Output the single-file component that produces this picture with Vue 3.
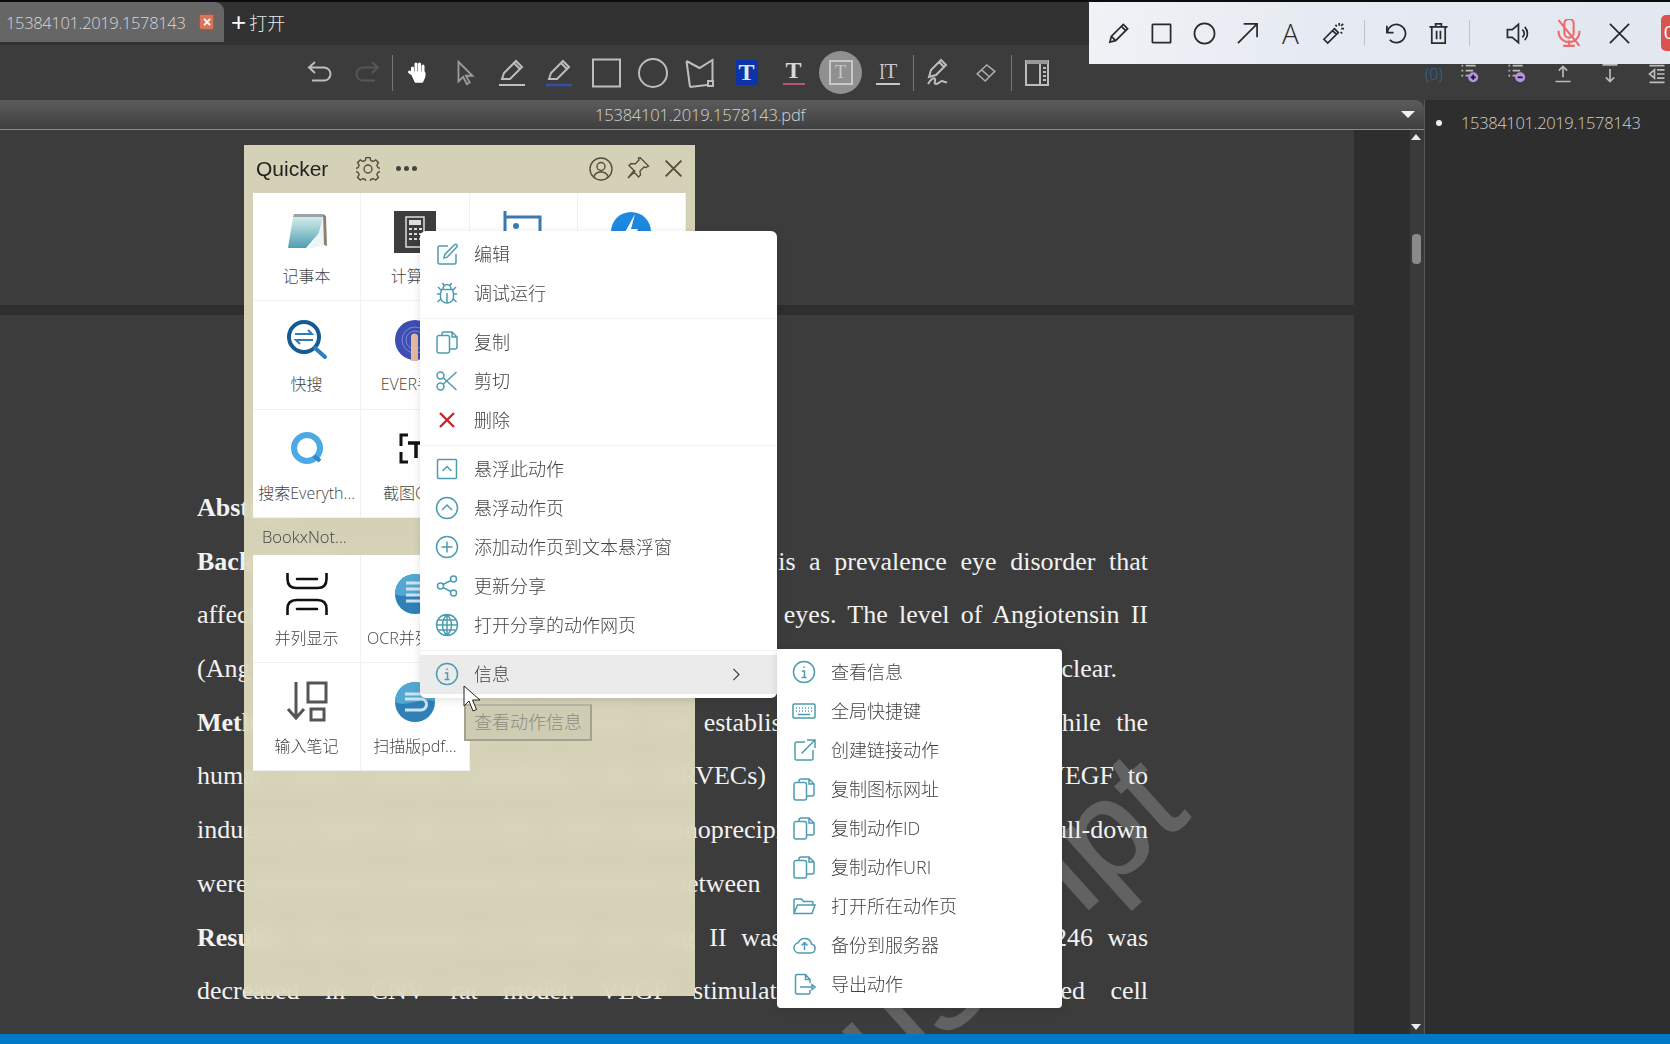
<template>
  <div class="app">
    <!-- タブ -->
    <header class="tabstrip">
      <div class="tab">
        <span class="tab-title">15384101.2019.1578143</span>
        <span class="tab-close">×</span>
      </div>
      <div class="tab-open"><span class="plus">+</span>打开</div>
    </header>

    <!-- ツールバー -->
    <div class="toolbar">
      <button class="tool"><svg viewBox="0 0 30 30" class="ico"><path d="M10 4L4 9.5l6 5.5M4 9.5h15a6.5 6.5 0 0 1 0 13H7" /></svg></button>
      <button class="tool"><svg viewBox="0 0 30 30" class="ico dim"><path d="M20 4l6 5.5-6 5.5M26 9.5H11a6.5 6.5 0 0 0 0 13h12" /></svg></button>
      <i class="sep"></i>
      <button class="tool">
        <svg viewBox="0 0 30 30" class="ico hand"><path d="M9.5 16V10M13 14V6M16.5 14V6M20 15V8M9.5 16l-3-2M10 17l3 6h6l2-5v-3" /><path class="palm" d="M10 15h10v5l-2 3h-5z" /></svg>
      </button>
      <button class="tool"><svg viewBox="0 0 30 30" class="ico thin"><path d="M8 3v21l5-5 4 8 3-2-4-7h7z" /></svg></button>
      <button class="tool"><svg viewBox="0 0 30 30" class="ico"><path d="M5 21l2-6L19 3l6 6-12 12zM17 5l6 6M2 27h26" /></svg></button>
      <button class="tool"><svg viewBox="0 0 30 30" class="ico"><path d="M5 21l2-6L19 3l6 6-12 12zM17 5l6 6" /><path class="blue-line" d="M2 27h26" /></svg></button>
      <button class="tool"><svg viewBox="0 0 30 30" class="ico"><path d="M2 1.5h27v27H2z" /></svg></button>
      <button class="tool"><svg viewBox="0 0 30 30" class="ico"><path d="M29 15a14 14 0 1 1-28 0 14 14 0 1 1 28 0z" /></svg></button>
      <button class="tool"><svg viewBox="0 0 30 30" class="ico"><path d="M1.5 3l13 7 13-8v21M22 27l-17 2zM1.5 3L5 29" /><path d="M23 23h5v5h-5z" /></svg></button>
      <button class="tool"><span class="t-box blue">T</span></button>
      <button class="tool"><span class="t-under">T</span></button>
      <button class="tool"><span class="t-round"><span class="t-square">T</span></span></button>
      <button class="tool"><span class="t-beam"><b>I</b>T</span></button>
      <i class="sep"></i>
      <button class="tool"><svg viewBox="0 0 30 30" class="ico"><path d="M5 19L7 12 17 2l5 5-10 10zM15 4l5 5M4 26c3-5 6-7 7-5s-2 5 1 5 4-3 6-3 2 2 5 1" /></svg></button>
      <button class="tool"><svg viewBox="0 0 30 30" class="ico small"><path d="M4 16L16 5l10 8-12 12zM9.5 11l10 9" /></svg></button>
      <i class="sep"></i>
      <button class="tool"><svg viewBox="0 0 30 30" class="ico"><path d="M4 3h22v24H4zM18 3v24" /><path class="fat" d="M4 4h22" /><path d="M21 10h3M21 14h3M21 18h3M21 22h3" /></svg></button>
    </div>

    <div class="main">
      <section class="viewer">
        <div class="titlebar">
          <span class="file-name">15384101.2019.1578143.pdf</span>
          <span class="title-arrow"></span>
        </div>
        <div class="scroller">
          <div class="pages">
            <div class="page first"></div>
            <article class="page second">
              <div class="watermark">Manuscript</div>
              <p class="line"><b>Abstract</b></p>
              <p class="line just"><b>Background:</b> Choroidal neovascularization (CNVs) is a prevalence eye disorder that</p>
              <p class="line just">affects the choroid and retina, causing visual loss in eyes. The level of Angiotensin II</p>
              <p class="line just short">(Ang II) and its function in the development of CNV remains unclear.</p>
              <p class="line just"><b>Methods:</b> The retinal CNV rat model was established in vivo by laser, while the</p>
              <p class="line just">human retinal vascular endothelial cells (HRVECs) were then treated with VEGF to</p>
              <p class="line just">induce an HRVE cells in vitro. RNA immunoprecipitation assays and then pull-down</p>
              <p class="line wide-words">were performed to determine the interaction between</p>
              <p class="line just"><b>Results:</b> The expression of VEGF and Ang II was increased, while miR-1246 was</p>
              <p class="line just">decreased in CNV rat model. VEGF stimulation of RVECs promoted cell</p>
              <p class="line just">proliferation, migration and tube formation, and the level of Ang II was elevated</p>
            </article>
          </div>
          <div class="scrollbar">
            <span class="sb-up"></span>
            <span class="sb-thumb"></span>
            <span class="sb-down"></span>
          </div>
        </div>
      </section>

      <aside class="outline">
        <ul>
          <li>15384101.2019.1578143</li>
        </ul>
      </aside>
    </div>

    <div class="statusbar"></div>

    <!-- 右パネルのツール（フロートバーの下に隠れる） -->
    <div class="outline-tools">
      <span class="count">(0)</span>
      <svg viewBox="0 0 24 24" class="ot"><path d="M3 2h2M8 2h12M3 8h2M8 8h9M3 14h2M8 14h4" /><circle cx="17" cy="16" r="6" fill="#b493df" stroke="none" /><path class="dark" d="M14 16h6M17 13v6" /></svg>
      <svg viewBox="0 0 24 24" class="ot"><path d="M3 2h2M8 2h12M3 8h2M8 8h9M3 14h2M8 14h4" /><circle cx="17" cy="16" r="6" fill="#b493df" stroke="none" /><path class="dark" d="M14 16h6" /></svg>
      <svg viewBox="0 0 24 24" class="ot"><path d="M12 16V3M7 8l5-5 5 5M3 21h18" /></svg>
      <svg viewBox="0 0 24 24" class="ot"><path d="M12 6v15M7 16l5 5 5-5M3 1h18" /></svg>
      <svg viewBox="0 0 24 24" class="ot"><path d="M3 2h18M12 7h9M12 12h9M12 17h9M3 22h18M9 7v10l-6-5z" /></svg>
    </div>

    <!-- フロートツールバー -->
    <div class="floatbar">
      <button class="fb"><svg viewBox="0 0 24 24"><path d="M3 21l1.5-6L17 2.5l4.5 4.5L9 19.5zM4.5 15L9 19.5M15 4.5L19.5 9" /></svg></button>
      <button class="fb"><svg viewBox="0 0 24 24"><path d="M3 2.5h18a.5.5 0 0 1 .5.5v18a.5.5 0 0 1-.5.5H3a.5.5 0 0 1-.5-.5V3a.5.5 0 0 1 .5-.5z" /></svg></button>
      <button class="fb"><svg viewBox="0 0 24 24"><path d="M22.5 12a10.5 10.5 0 1 1-21 0 10.5 10.5 0 1 1 21 0z" /></svg></button>
      <button class="fb"><svg viewBox="0 0 24 24"><path d="M2 22L22 2M8 2h14v14" /></svg></button>
      <button class="fb"><span class="fb-a">A</span></button>
      <button class="fb"><svg viewBox="0 0 24 24"><path d="M2 18L13 7l4 4L6 22zM11 9l4 4M18 1v3M23 7h-3M14 3l1.5 1.5M22 2l-2 2M21 12l-1.5-1.5" /></svg></button>
      <i class="fsep"></i>
      <button class="fb"><svg viewBox="0 0 24 24"><path d="M3 4v7h7M3.5 11A9.5 9.5 0 1 1 6 18.5" /></svg></button>
      <button class="fb"><svg viewBox="0 0 24 24"><path d="M2.5 5h19M9 5V2h6v3M5 5v17h14V5M10 9v9M14 9v9" /></svg></button>
      <i class="fsep wide"></i>
      <button class="fb sound"><svg viewBox="0 0 24 24"><path d="M1.5 8h5L13 2.5v19L6.5 16h-5zM17 8a5 5 0 0 1 0 8M19.5 5a10 10 0 0 1 0 14" /></svg></button>
      <button class="fb mic"><svg viewBox="0 0 24 24"><path d="M8 4a4 4 0 0 1 8 0v8a4 4 0 0 1-8 0zM3 10c0 13 18 13 18 0M12 18.5v4M7 23h10M3 1l18 22" /></svg></button>
      <button class="fb close"><svg viewBox="0 0 24 24"><path d="M2 2l20 20M22 2L2 22" /></svg></button>
      <span class="rec">0</span>
    </div>

    <!-- Quicker パネル -->
    <div class="quicker">
      <div class="q-head">
        <span class="q-title">Quicker</span>
        <svg class="q-gear" viewBox="0 0 24 24"><path d="M10 1.5h4l.7 3 2.3 1 2.7-1.6 2.8 2.8-1.6 2.7 1 2.3 2.6.7v3.2l-2.6.7-1 2.3 1.6 2.7-2.8 2.8-2.7-1.6-2.3 1-.7 2.9h-4l-.7-2.9-2.3-1-2.7 1.6-2.8-2.8 1.6-2.7-1-2.3-2.6-.7v-3.2l2.6-.7 1-2.3L1.5 6.7l2.8-2.8L7 5.5l2.3-1zM16 13a4 4 0 1 1-8 0 4 4 0 1 1 8 0z" transform="translate(0 -1)" /></svg>
        <span class="q-dots"><i></i><i></i><i></i></span>
        <svg class="q-user" viewBox="0 0 24 24"><path d="M23 12a11 11 0 1 1-22 0 11 11 0 1 1 22 0zM16 9.5a4 4 0 1 1-8 0 4 4 0 1 1 8 0zM5 19.5c1-3 3-4.5 7-4.5s6 1.5 7 4.5" /></svg>
        <svg class="q-pin" viewBox="0 0 24 24"><path d="M14 1.5l8.5 8.5-2.5 1.5-2-.5-4 4 .5 4-2 2L7.5 15 2 22l7-6.500L3 9.500l2-2 4 .5 4-4-.5-2z" /></svg>
        <svg class="q-x" viewBox="0 0 24 24"><path d="M3 3l18 18M21 3L3 21" /></svg>
      </div>

      <div class="q-grid">
        <div class="cell">
          <svg class="cell-ico" viewBox="0 0 42 42">
            <defs><linearGradient id="note" x1="0" y1="0" x2="0" y2="1"><stop offset="0" stop-color="#d4ecec" /><stop offset="1" stop-color="#4f9fb0" /></linearGradient></defs>
            <path d="M8 3h29v3H7z" fill="#9aa4a6" />
            <path d="M7 6h30l-4 16-13 15H2z" fill="url(#note)" />
            <path d="M37 6l1 28-16 4 11-16z" fill="#eef3f4" />
            <path d="M37 3l3 2 1 30-3-1z" fill="#8f7f6f" />
          </svg>
          <span>记事本</span>
        </div>
        <div class="cell">
          <svg class="cell-ico" viewBox="0 0 42 42">
            <path d="M0 0h42v42H0z" fill="#3d3d3d" />
            <path d="M12 6h18v30H12z" fill="none" stroke="#ddd" stroke-width="1.5" />
            <path d="M15 9h12v5H15z" fill="#ddd" />
            <path d="M15 18h3M20 18h3M25 18h3M15 23h3M20 23h3M25 23h3M15 28h3M20 28h3M25 28h3" stroke="#ddd" stroke-width="2" />
          </svg>
          <span>计算器</span>
        </div>
        <div class="cell">
          <svg class="cell-ico" viewBox="0 0 42 42">
            <path d="M3 0v6h35v30H3V0" fill="none" stroke="#3c78b0" stroke-width="3" />
            <circle cx="14" cy="15" r="3" fill="#3c78b0" />
          </svg>
          <span></span>
        </div>
        <div class="cell">
          <svg class="cell-ico" viewBox="0 0 42 42">
            <circle cx="21" cy="21" r="20" fill="#1c88e0" />
            <path d="M25 3L14 23h7l-4 15 11-20h-7z" fill="#fff" />
          </svg>
          <span></span>
        </div>

        <div class="cell">
          <svg class="cell-ico" viewBox="0 0 42 42">
            <circle cx="18" cy="18" r="15" fill="none" stroke="#165a92" stroke-width="4" />
            <path d="M29 29l10 9" stroke="#2a7dbe" stroke-width="4" stroke-linecap="round" />
            <path d="M9 15h17l-4-4M27 21H10l4 4" fill="none" stroke="#2a7dbe" stroke-width="2" />
          </svg>
          <span>快搜</span>
        </div>
        <div class="cell">
          <svg class="cell-ico" viewBox="0 0 42 42">
            <circle cx="21" cy="21" r="20" fill="#3d4fb0" />
            <circle cx="21" cy="21" r="13" fill="none" stroke="#7c8ad6" stroke-width="1" />
            <circle cx="21" cy="21" r="9" fill="none" stroke="#7c8ad6" stroke-width="1" />
            <path d="M17 42V18a3.5 3.5 0 0 1 7 0v24z" fill="#e6b9a0" />
          </svg>
          <span>EVER手势</span>
        </div>
        <div class="cell"></div>
        <div class="cell"></div>

        <div class="cell">
          <svg class="cell-ico" viewBox="0 0 42 42">
            <circle cx="21" cy="20" r="13" fill="none" stroke="#4ba9e6" stroke-width="6" />
            <path d="M28 28l6 5" stroke="#2f86c8" stroke-width="4" />
          </svg>
          <span>搜索Everyth...</span>
        </div>
        <div class="cell">
          <svg class="cell-ico" viewBox="0 0 42 42">
            <path d="M14 7H7v11M7 24v10h7" fill="none" stroke="#111" stroke-width="3" />
            <path d="M14 15h16M22 15v15" fill="none" stroke="#111" stroke-width="3.5" />
          </svg>
          <span>截图OCR</span>
        </div>
        <div class="cell"></div>
        <div class="cell"></div>
      </div>

      <div class="q-group">BookxNot...</div>

      <div class="q-grid two">
        <div class="cell">
          <svg class="cell-ico" viewBox="0 0 42 42">
            <path d="M1.5 0v6c0 7 4 9 9 9h21c5 0 9-2 9-9V0M1.5 42v-6c0-7 4-9 9-9h21c5 0 9 2 9 9v6M11 6h20M11 36h20" fill="none" stroke="#111" stroke-width="2.6" stroke-linecap="round" />
          </svg>
          <span>并列显示</span>
        </div>
        <div class="cell">
          <svg class="cell-ico" viewBox="0 0 42 42">
            <circle cx="21" cy="21" r="20" fill="#2f7fb8" />
            <path d="M1 21a20 20 0 0 1 40 0C30 15 12 27 1 21z" fill="#52a8d2" />
            <path d="M12 10h20M12 16h20M12 22h20M12 28h20" stroke="#cde4f0" stroke-width="3" />
          </svg>
          <span>OCR并列显示</span>
        </div>
        <div class="cell">
          <svg class="cell-ico" viewBox="0 0 42 42">
            <path d="M10 1v36M2 28l8 9 8-9M22 2h18v19H22zM25 28h13v11H25z" fill="none" stroke="#555" stroke-width="3" />
          </svg>
          <span>输入笔记</span>
        </div>
        <div class="cell">
          <svg class="cell-ico" viewBox="0 0 42 42">
            <circle cx="21" cy="21" r="20" fill="#2f7fb8" />
            <path d="M1 21a20 20 0 0 1 40 0C30 15 12 27 1 21z" fill="#52a8d2" />
            <path d="M11 13h20M11 18h16a5 5 0 0 1 0 11H11" fill="none" stroke="#cde4f0" stroke-width="3" />
          </svg>
          <span>扫描版pdf...</span>
        </div>
      </div>
    </div>

    <!-- 右クリックメニュー -->
    <div class="menu">
      <template v-for="(item, i) in menuItems" :key="i">
        <div v-if="item.sep" class="menu-sep"></div>
        <div v-else class="menu-item" :class="{ active: item.active }">
          <svg class="menu-ico" :class="{ danger: item.danger }" viewBox="0 0 24 24"><path :d="icons[item.icon]" /></svg>
          <span>{{ item.label }}</span>
          <svg v-if="item.more" class="menu-more" viewBox="0 0 24 24"><path d="M7 3l9 9-9 9" /></svg>
        </div>
      </template>
    </div>

    <div class="menu sub">
      <div v-for="item in subItems" :key="item.label" class="menu-item">
        <svg class="menu-ico" viewBox="0 0 24 24"><path :d="icons[item.icon]" /></svg>
        <span>{{ item.label }}</span>
      </div>
    </div>

    <div class="tip">查看动作信息</div>
    <svg class="pointer" viewBox="0 0 20 28"><path d="M1 1v20l5-5 4 10 3.5-1.5-4-9.5H17z" /></svg>
  </div>
</template>

<script setup>
const circle = 'M22.5 12a10.5 10.5 0 1 1-21 0 10.5 10.5 0 1 1 21 0z'
const copy = 'M7 5V4a2 2 0 0 1 2-2h8l5 5v10a2 2 0 0 1-2 2h-5M17 2v5h5M4 5.5h8.5a2 2 0 0 1 2 2V21a2 2 0 0 1-2 2H4a2 2 0 0 1-2-2V7.5a2 2 0 0 1 2-2z'

const icons = {
  edit: 'M13 4H4.5A1.5 1.5 0 0 0 3 5.5v15A1.5 1.5 0 0 0 4.5 22h15a1.5 1.5 0 0 0 1.5-1.5V12M9 16l.8-3.6L19.5 2.7a1.6 1.6 0 0 1 2.3 0 1.6 1.6 0 0 1 0 2.3L12.2 15.2z',
  bug: 'M8 8a4 4.5 0 0 1 8 0M6.5 8.5h11l1 4V16a6.5 6 0 0 1-13 0v-3.5zM12 12v10M6 13H2M18 13h4M5.7 18l-3.2 3M18.3 18l3.2 3M6 9L3 6M18 9l3-3M9 4.5L7.5 2M15 4.5L16.5 2',
  copy,
  cut: 'M9 6.5a3.5 3.5 0 1 1-7 0 3.5 3.5 0 1 1 7 0zM9 17.5a3.5 3.5 0 1 1-7 0 3.5 3.5 0 1 1 7 0zM8.2 8.8L21.5 21M8.2 15.2L21.5 3',
  del: 'M5 5l14 14M19 5L5 19',
  floatOne: 'M3.5 2.5h17a1 1 0 0 1 1 1v17a1 1 0 0 1-1 1h-17a1 1 0 0 1-1-1v-17a1 1 0 0 1 1-1zM7.5 14L12 9.5l4.5 4.5',
  floatPage: circle + 'M7 14l5-5 5 5',
  add: circle + 'M12 6.5v11M6.5 12h11',
  share: 'M21.5 5a3 3 0 1 1-6 0 3 3 0 1 1 6 0zM21.5 19a3 3 0 1 1-6 0 3 3 0 1 1 6 0zM8.5 12a3 3 0 1 1-6 0 3 3 0 1 1 6 0zM8 10.5l7.8-4M8 13.5l7.8 4',
  globe: circle + 'M12 1.5c-6 6-6 15 0 21M12 1.5c6 6 6 15 0 21M1.5 12h21M3 7h18M3 17h18M12 1.5v21',
  info: circle + 'M12 6.5V8M9.8 11h2.7v6M9.5 17.5h5',
  keyboard: 'M2 5h20a1 1 0 0 1 1 1v12a1 1 0 0 1-1 1H2a1 1 0 0 1-1-1V6a1 1 0 0 1 1-1zM4 9h1M7 9h1M10 9h1M13 9h1M16 9h1M19 9h1M4 12h1M7 12h1M10 12h1M13 12h1M16 12h1M19 12h1M6 15.5h12',
  link: 'M13 4H4.5A1.5 1.5 0 0 0 3 5.5v15A1.5 1.5 0 0 0 4.5 22h15a1.5 1.5 0 0 0 1.5-1.5V12M9.5 15.5L23 2M15 2h8v8',
  folder: 'M2 19V6a1 1 0 0 1 1-1h6.5l2 2.5H20a1 1 0 0 1 1 1V11M2 19.5L5.5 11H23l-3 8.5z',
  cloud: 'M7 20h11.5a4.5 4.5 0 0 0 1-8.9 7 7 0 0 0-13.3-1.4A5.2 5.2 0 0 0 7 20zM12.5 17v-7M9.5 12.5l3-3 3 3',
  exportAct: 'M18 11V7.5L13.5 2.5H5A1.5 1.5 0 0 0 3.5 4v16.5A1.5 1.5 0 0 0 5 22h11.5a1.5 1.5 0 0 0 1.5-1.5V18M13.5 2.5v5H18M8 15h12M20 12.5l3 2.5-3 2.5z',
}

const menuItems = [
  { label: '编辑', icon: 'edit' },
  { label: '调试运行', icon: 'bug' },
  { sep: true },
  { label: '复制', icon: 'copy' },
  { label: '剪切', icon: 'cut' },
  { label: '删除', icon: 'del', danger: true },
  { sep: true },
  { label: '悬浮此动作', icon: 'floatOne' },
  { label: '悬浮动作页', icon: 'floatPage' },
  { label: '添加动作页到文本悬浮窗', icon: 'add' },
  { label: '更新分享', icon: 'share' },
  { label: '打开分享的动作网页', icon: 'globe' },
  { sep: true },
  { label: '信息', icon: 'info', active: true, more: true },
]

const subItems = [
  { label: '查看信息', icon: 'info' },
  { label: '全局快捷键', icon: 'keyboard' },
  { label: '创建链接动作', icon: 'link' },
  { label: '复制图标网址', icon: 'copy' },
  { label: '复制动作ID', icon: 'copy' },
  { label: '复制动作URI', icon: 'copy' },
  { label: '打开所在动作页', icon: 'folder' },
  { label: '备份到服务器', icon: 'cloud' },
  { label: '导出动作', icon: 'exportAct' },
]
</script>

<style scoped>
.app {
  position: relative;
  width: 1670px;
  height: 1044px;
  overflow: hidden;
  display: flex;
  flex-direction: column;
  background: #333;
  font-family: "Open Sans", "Noto Sans CJK SC", sans-serif;
  font-weight: 300;
}

svg {
  display: block;
}

button {
  background: none;
  border: none;
  padding: 0;
  margin: 0;
  display: flex;
  align-items: center;
  justify-content: center;
}

/* tabs */
.tabstrip {
  height: 45px;
  box-sizing: border-box;
  border-top: 2px solid #0c0c0c;
  background: #323232;
  display: flex;
  flex-shrink: 0;
}

.tab {
  width: 224px;
  height: 40px;
  box-sizing: border-box;
  padding-left: 6px;
  background: #666;
  border-radius: 0 9px 0 0;
  display: flex;
  align-items: center;
  color: #d6d6d6;
  font-size: 16.5px;
  letter-spacing: -0.35px;
}

.tab-close {
  width: 13px;
  height: 14px;
  margin-left: 15px;
  background: #d8745a;
  box-shadow: 0 0 3px #c8583c;
  color: #fff;
  font: bold 14px/14px "Liberation Sans", sans-serif;
  text-align: center;
}

.tab-open {
  height: 40px;
  display: flex;
  align-items: center;
  padding-left: 7px;
  color: #e6e6e6;
  font-size: 18px;
}

.plus {
  font: 26px/1 "Liberation Sans", sans-serif;
  color: #fff;
  margin-right: 3px;
}

/* toolbar */
.toolbar {
  height: 55px;
  flex-shrink: 0;
  box-sizing: border-box;
  padding-left: 296px;
  background: #3c3c3c;
  display: flex;
  align-items: center;
}

.tool {
  width: 47px;
  height: 55px;
  flex-shrink: 0;
}

.sep {
  width: 1px;
  height: 36px;
  margin: 0 1.5px;
  background: #777;
  flex-shrink: 0;
}

.ico {
  width: 30px;
  height: 30px;
  fill: none;
  stroke: #bdbdbd;
  stroke-width: 2;
}

.ico.dim {
  stroke: #565656;
}

.ico.thin {
  stroke: #9a9a9a;
  width: 28px;
  height: 28px;
}

.ico.small {
  width: 24px;
  height: 24px;
  stroke-width: 2;
  stroke: #aaa;
}

.ico.hand {
  stroke: #fff;
  stroke-width: 3;
  stroke-linecap: round;
}

.palm {
  fill: #fff;
}

.blue-line {
  stroke: #2e52a8;
  stroke-width: 2.5;
}

.fat {
  stroke-width: 4;
  stroke: #999;
}

.t-box {
  width: 22px;
  height: 25px;
  font: bold 24px/25px "Liberation Serif", serif;
  text-align: center;
}

.t-box.blue {
  background: #0c33a8;
  color: #dfe6f5;
}

.t-under {
  width: 22px;
  height: 25px;
  box-sizing: border-box;
  border-bottom: 2px solid #b8567a;
  font: bold 24px/21px "Liberation Serif", serif;
  color: #d8d8d8;
  text-align: center;
}

.t-round {
  width: 43px;
  height: 43px;
  border-radius: 50%;
  background: #909090;
  display: flex;
  align-items: center;
  justify-content: center;
}

.t-square {
  width: 20px;
  height: 21px;
  box-sizing: content-box;
  border: 2px solid #c8c8c8;
  font: 18px/21px "Liberation Serif", serif;
  color: #c8c8c8;
  text-align: center;
}

.t-beam {
  width: 24px;
  height: 25px;
  box-sizing: border-box;
  border-bottom: 2px solid #c8c8c8;
  font: 21px/22px "Liberation Serif", serif;
  color: #c8c8c8;
  display: flex;
  justify-content: center;
}

.t-beam b {
  font-weight: 400;
  font-size: 24px;
  transform: scaleX(0.7);
  margin-right: -1px;
}

/* main */
.main {
  flex: 1;
  min-height: 0;
  display: flex;
}

.viewer {
  width: 1424px;
  flex-shrink: 0;
  display: flex;
  flex-direction: column;
  background: #3c3c3c;
}

.titlebar {
  height: 30px;
  flex-shrink: 0;
  box-sizing: border-box;
  padding: 0 9px 0 595px;
  border-bottom: 1px solid #8a8a8a;
  border-radius: 0 9px 0 0;
  background: linear-gradient(#5c5c5c, #3f3f3f);
  display: flex;
  align-items: center;
  justify-content: space-between;
  color: #d4d4d4;
  font-size: 16.5px;
  letter-spacing: -0.2px;
}

.title-arrow {
  border-left: 7px solid transparent;
  border-right: 7px solid transparent;
  border-top: 7px solid #f2f2f2;
}

.scroller {
  flex: 1;
  min-height: 0;
  display: flex;
}

.pages {
  width: 1410px;
  background: #2e2e2e;
  overflow: hidden;
}

.page {
  position: relative;
  width: 1354px;
  background: #3c3c3c;
  font-family: "Liberation Serif", serif;
  font-weight: 400;
  color: #f2f2f2;
  font-size: 26px;
}

.page.first {
  height: 175px;
  margin-bottom: 10px;
}

.page.second {
  height: 760px;
  box-sizing: border-box;
  padding: 166px 206px 0 197px;
  overflow: hidden;
}

.line {
  margin: 0;
  height: 53.7px;
  line-height: 53.7px;
  white-space: nowrap;
  position: relative;
}

.line.just {
  text-align: justify;
  text-align-last: justify;
}

.line.short {
  margin-right: 31px;
}

.line.wide-words {
  word-spacing: 2px;
}

.watermark {
  position: absolute;
  right: 147px;
  bottom: 242px;
  transform: rotate(-42deg);
  transform-origin: 100% 100%;
  font-family: "Liberation Sans", sans-serif;
  font-size: 140px;
  line-height: 1;
  color: #626262;
  -webkit-text-stroke: 1.5px #626262;
  white-space: nowrap;
}

.scrollbar {
  width: 14px;
  background: #3a3a3a;
  position: relative;
}

.sb-up,
.sb-down {
  position: absolute;
  left: 1px;
  border-left: 5px solid transparent;
  border-right: 5px solid transparent;
}

.sb-up {
  top: 4px;
  border-bottom: 6px solid #eee;
}

.sb-down {
  bottom: 4px;
  border-top: 6px solid #eee;
}

.sb-thumb {
  position: absolute;
  top: 104px;
  left: 2px;
  width: 9px;
  height: 30px;
  border-radius: 4px;
  background: #8a8a8a;
}

/* outline */
.outline {
  flex: 1;
  background: #2e2e2e;
  border-left: 1px solid #585858;
  color: #cfcfcf;
  font-size: 16.5px;
  letter-spacing: -0.35px;
}

.outline ul {
  margin: 0;
  padding: 11px 0 0 36px;
  list-style: none;
}

.outline li {
  position: relative;
  line-height: 24px;
}

.outline li::before {
  content: "";
  position: absolute;
  left: -25px;
  top: 9px;
  width: 6px;
  height: 6px;
  border-radius: 50%;
  background: #eee;
}

.statusbar {
  height: 10px;
  flex-shrink: 0;
  background: #0078c8;
  position: relative;
}

.outline-tools {
  position: absolute;
  left: 1425px;
  top: 60px;
  width: 245px;
  height: 28px;
  display: flex;
  align-items: center;
}

.count {
  width: 16px;
  color: #2a6ca0;
  font-size: 16px;
}

.ot {
  width: 20px;
  height: 24px;
  margin-left: 27px;
  fill: none;
  stroke: #bbb;
  stroke-width: 2;
}

.ot:first-of-type {
  margin-left: 18px;
}

.ot .dark {
  stroke: #1a1040;
}

/* floating bar */
.floatbar {
  position: absolute;
  left: 1089px;
  top: 2px;
  width: 581px;
  height: 62px;
  box-sizing: border-box;
  padding-left: 8px;
  background: linear-gradient(100deg, #f0f2f6, #e6eaf2 40%, #e3e8f0);
  display: flex;
  align-items: center;
}

.fb {
  width: 43px;
  height: 40px;
  flex-shrink: 0;
}

.fb svg {
  width: 23px;
  height: 23px;
  fill: none;
  stroke: #2a2a2a;
  stroke-width: 1.8;
}

.fb-a {
  font: 300 28px/28px "Open Sans", sans-serif;
  color: #2a2a2a;
}

.fsep {
  width: 1px;
  height: 26px;
  margin: 0 9px;
  background: #c0c4cc;
  flex-shrink: 0;
}

.fsep.wide {
  margin-right: 22px;
}

.fb.sound {
  width: 51px;
}

.fb.mic {
  width: 51px;
}

.fb.mic svg {
  width: 28px;
  height: 28px;
  stroke: #ef6a6a;
}

.fb.close {
  width: 51px;
}

.rec {
  width: 30px;
  height: 36px;
  margin-left: 16px;
  flex-shrink: 0;
  background: #d9534f;
  border-radius: 5px;
  color: #fff;
  font: 18px/36px "Liberation Sans", sans-serif;
  padding-left: 3px;
}

/* quicker */
.quicker {
  position: absolute;
  left: 244px;
  top: 145px;
  width: 451px;
  height: 851px;
  box-sizing: border-box;
  padding: 0 9px;
  background: rgba(228, 224, 196, 0.91);
  backdrop-filter: blur(10px);
  color: #444;
}

.q-head {
  height: 48px;
  position: relative;
  display: flex;
  align-items: center;
}

.q-title {
  margin-left: 3px;
  font: 21px "Liberation Sans", sans-serif;
  color: #222;
}

.q-head svg {
  position: absolute;
  top: 12px;
  width: 24px;
  height: 24px;
  fill: none;
  stroke: #55503a;
  stroke-width: 1.4;
}

.q-gear {
  left: 103px;
}

.q-user {
  left: 336px;
}

.q-head .q-pin {
  left: 373px;
  top: 11px;
}

.q-head .q-x {
  left: 410px;
  width: 21px;
  height: 21px;
  top: 13px;
  stroke-width: 2.2;
}

.q-dots {
  position: absolute;
  left: 143px;
  top: 21px;
  display: flex;
  gap: 3px;
}

.q-dots i {
  width: 5px;
  height: 5px;
  border-radius: 50%;
  background: #444;
}

.q-grid {
  display: grid;
  grid-template-columns: repeat(4, 108.25px);
  grid-auto-rows: 108.3px;
  background: #fff;
}

.q-grid.two {
  grid-template-columns: repeat(2, 108.25px);
  width: 216.5px;
}

.cell {
  box-sizing: border-box;
  border-right: 1px solid #f1f1f1;
  border-bottom: 1px solid #f1f1f1;
  display: flex;
  flex-direction: column;
  align-items: center;
  padding-top: 18px;
  font-size: 16px;
  white-space: nowrap;
  overflow: hidden;
}

.cell-ico {
  width: 42px;
  height: 42px;
  flex-shrink: 0;
}

.cell span {
  margin-top: 12px;
  line-height: 22px;
}

.q-group {
  height: 37px;
  line-height: 37px;
  padding-left: 9px;
  font-size: 16.5px;
  color: #444;
}

/* context menu */
.menu {
  position: absolute;
  left: 420px;
  top: 231px;
  width: 357px;
  box-sizing: border-box;
  padding: 3.5px 0 4.5px;
  background: #fff;
  border-radius: 6px;
  box-shadow: 0 2px 8px rgba(0, 0, 0, 0.12);
  color: #444;
  font-size: 18px;
}

.menu.sub {
  left: 777px;
  top: 649px;
  width: 285px;
  border-radius: 0 4px 4px 4px;
}

.menu-item {
  height: 39px;
  display: flex;
  align-items: center;
  padding-left: 15px;
  position: relative;
}

.menu-item span {
  position: relative;
  top: -1px;
}

.menu-item.active {
  background: #ebebeb;
}

.menu-ico {
  width: 24px;
  height: 24px;
  margin-right: 15px;
  flex-shrink: 0;
  fill: none;
  stroke: #4d9cb0;
  stroke-width: 1.5;
}

.menu-ico.danger {
  stroke: #c62828;
  stroke-width: 2.4;
}

.menu-more {
  position: absolute;
  right: 33px;
  top: 12px;
  width: 15px;
  height: 15px;
  fill: none;
  stroke: #444;
  stroke-width: 2;
}

.menu-sep {
  height: 1px;
  margin: 5px 0 4px;
  background: #f2f2f2;
}

.tip {
  position: absolute;
  left: 464px;
  top: 704px;
  width: 128px;
  height: 37px;
  box-sizing: border-box;
  border: 2px solid #a3a190;
  border-top-color: #b4b2a0;
  background: #cfccb4;
  color: #8d8c80;
  font-size: 18px;
  line-height: 33px;
  text-align: center;
}

.pointer {
  position: absolute;
  left: 463px;
  top: 685px;
  width: 20px;
  height: 28px;
  fill: #fff;
  stroke: #222;
  stroke-width: 1;
}
</style>

<style>
body {
  background: #333;
  overflow: hidden;
}
</style>
